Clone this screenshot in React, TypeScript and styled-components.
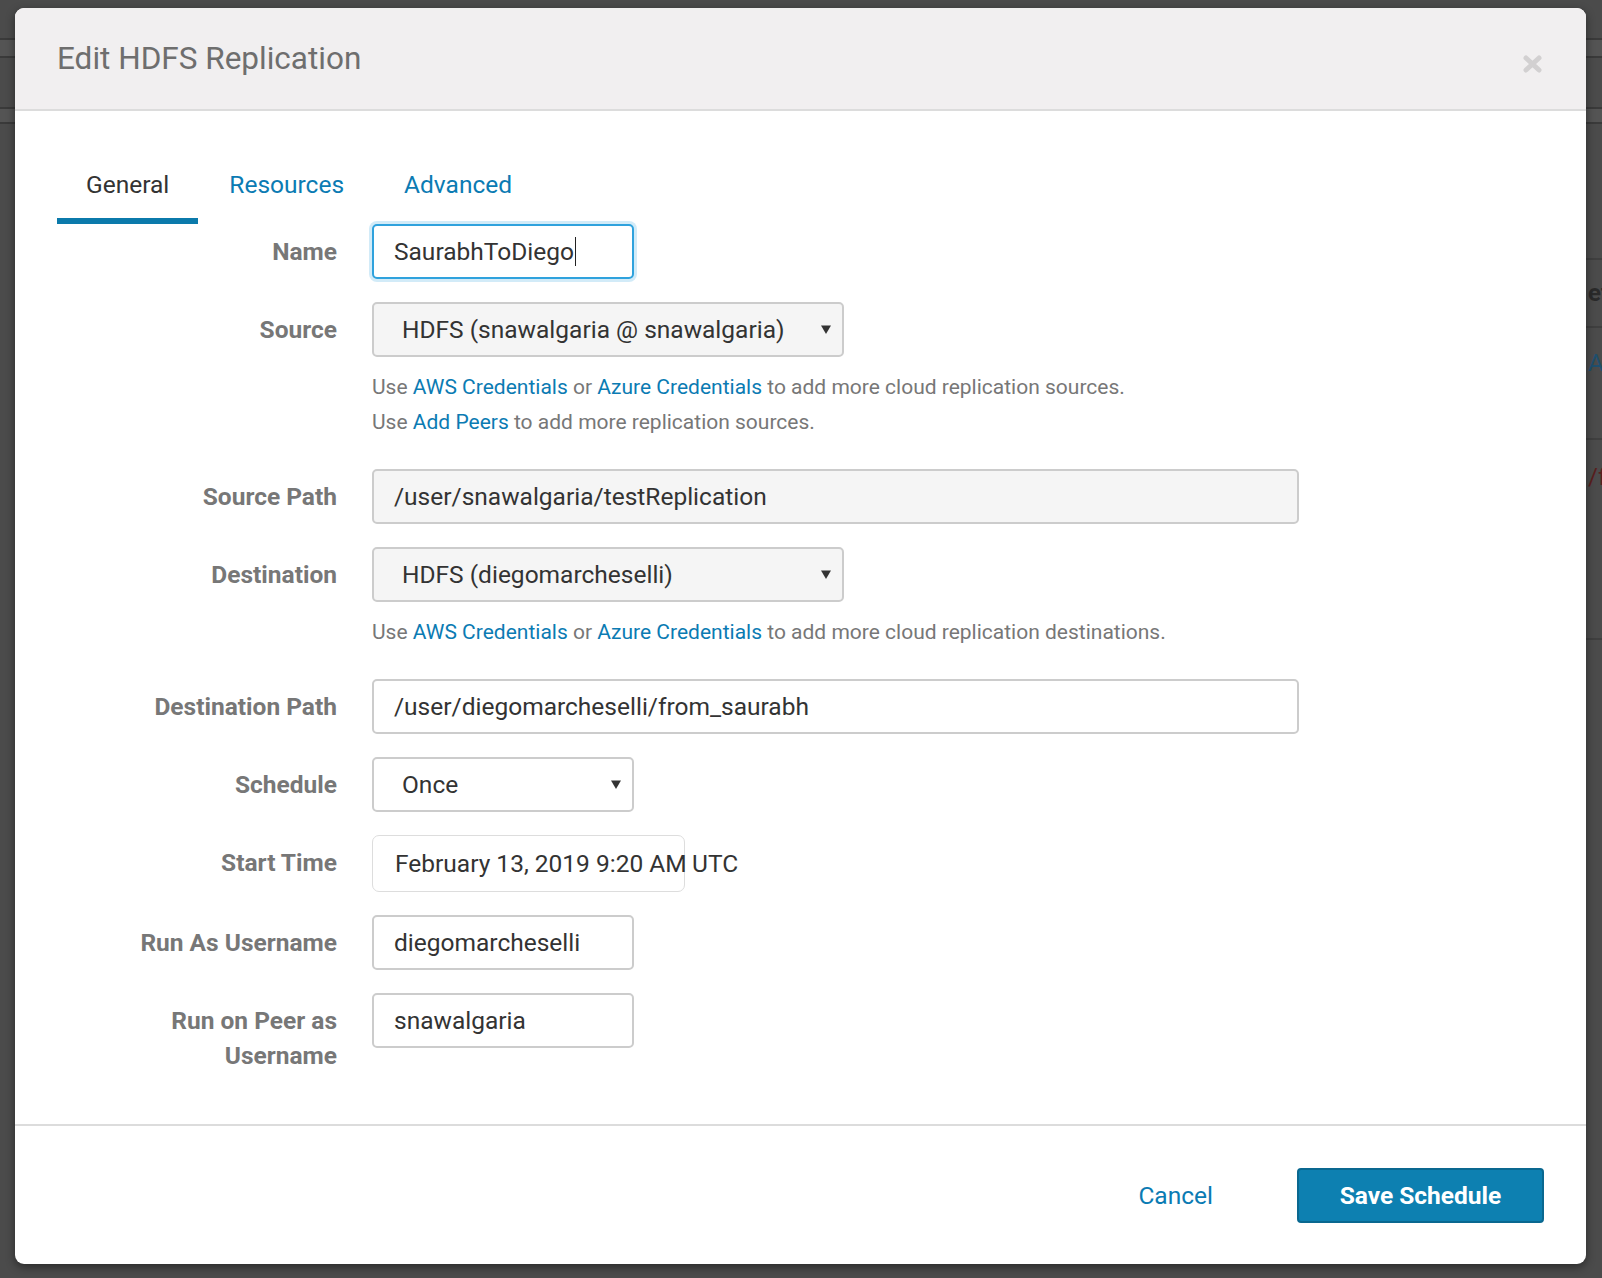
import styled, { createGlobalStyle } from "styled-components";

const GlobalStyle = createGlobalStyle`
  html, body {
    margin: 0;
    padding: 0;
  }
  body {
    background: #4b4b4b;
    font-family: Roboto, "Liberation Sans", Arial, sans-serif;
  }
  * {
    box-sizing: border-box;
  }
`;

const LINK = "#0b7bb3";

const Screen = styled.div`
  position: relative;
  width: 1602px;
  height: 1278px;
  overflow: hidden;
  padding: 8px 16px 0 15px;
`;

/* the page that lies under the backdrop */
const BackPage = styled.div`
  position: absolute;
  inset: 0;
  z-index: 0;
`;

const BackBand = styled.div<{ $h: number; $bg: string }>`
  height: ${(p) => p.$h}px;
  background: ${(p) => p.$bg};
  border-bottom: 2px solid #3a3a3a;
`;

const RightStrip = styled.div`
  position: absolute;
  top: 132px;
  right: 0;
  width: 16px;
  overflow: hidden;
`;

const StripCell = styled.div<{ $h: number; $pad: number; $color: string; $bold?: boolean }>`
  height: ${(p) => p.$h}px;
  padding: ${(p) => p.$pad}px 0 0 2px;
  border-bottom: 2px solid #3f3f3f;
  color: ${(p) => p.$color};
  font-size: 24px;
  line-height: 30px;
  font-weight: ${(p) => (p.$bold ? 700 : 400)};
  white-space: nowrap;
`;

const Modal = styled.div`
  position: relative;
  z-index: 1;
  width: 1571px;
  background: #ffffff;
  border-radius: 9px;
  overflow: hidden;
  box-shadow: 0 3px 10px rgba(0, 0, 0, 0.45);
`;

const Header = styled.div`
  height: 103px;
  background: #f1eff0;
  border-bottom: 2px solid #dcdcdc;
  padding: 0 44px 0 42px;
  display: flex;
  align-items: center;
  justify-content: space-between;
`;

const Title = styled.h3`
  margin: 0;
  font-size: 31.5px;
  font-weight: 400;
  line-height: 35px;
  color: #6e6e6e;
`;

const CloseIcon = styled.svg`
  margin-top: 11px;
  display: block;
`;

const Body = styled.div`
  padding: 42px 42px 51px 42px;
`;

const Tabs = styled.div`
  display: flex;
  gap: 2px;
`;

const Tab = styled.div<{ $active?: boolean }>`
  padding: 14px 29px 16px;
  font-size: 24.5px;
  line-height: 35px;
  color: ${(p) => (p.$active ? "#333333" : LINK)};
  border-bottom: 6px solid ${(p) => (p.$active ? "#0b7aab" : "transparent")};
`;

const FormRow = styled.div`
  display: flex;
  margin-bottom: 23px;
  &:last-child {
    margin-bottom: 0;
  }
`;

const Label = styled.div`
  width: 280px;
  flex-shrink: 0;
  padding-top: 10px;
  text-align: right;
  font-size: 24.5px;
  line-height: 35px;
  font-weight: 700;
  color: #777777;
`;

const Controls = styled.div`
  margin-left: 35px;
`;

const Field = styled.div<{ $w: number; $bg?: string }>`
  width: ${(p) => p.$w}px;
  height: 55px;
  padding: 0 20px;
  display: flex;
  align-items: center;
  border: 2px solid #cccccc;
  border-radius: 5px;
  background: ${(p) => p.$bg ?? "#ffffff"};
  font-size: 24.5px;
  color: #333333;
  white-space: nowrap;
`;

const FocusField = styled(Field)`
  border-color: #2fa2dd;
  box-shadow: 0 0 0 3px #d2ebf8;
`;

const Caret = styled.span`
  display: inline-block;
  width: 1.5px;
  height: 29px;
  margin-left: 1px;
  background: #222222;
`;

const SelectBox = styled(Field)`
  padding: 0 11px 0 28px;
  justify-content: space-between;
`;

const DateRow = styled.div`
  display: flex;
  align-items: center;
  font-size: 24.5px;
  color: #333333;
`;

const DateBox = styled.div`
  width: 313px;
  height: 57px;
  padding: 0 22px;
  display: flex;
  align-items: center;
  border: 1.5px solid #dddddd;
  border-radius: 7px;
  white-space: nowrap;
  overflow: visible;
`;

const Zone = styled.span`
  margin-left: 7px;
`;

const Help = styled.div`
  margin: 13px 0 6px;
  font-size: 21px;
  line-height: 35px;
  color: #777777;
`;

const Link = styled.a`
  color: ${LINK};
  text-decoration: none;
`;

const Footer = styled.div`
  border-top: 2px solid #dcdcdc;
  padding: 42px 42px 41px;
  display: flex;
  justify-content: flex-end;
  align-items: center;
`;

const CancelLink = styled.a`
  margin-right: 84px;
  font-size: 24.5px;
  line-height: 35px;
  color: ${LINK};
  text-decoration: none;
`;

const SaveButton = styled.button`
  width: 247px;
  height: 55px;
  border: 2px solid #0a6890;
  border-radius: 4px;
  background: #0d80b1;
  color: #ffffff;
  font-family: inherit;
  font-size: 24.5px;
  font-weight: 700;
`;

const Arrow = () => (
  <svg width="10" height="9" viewBox="0 0 10 9">
    <path d="M0 0.5 H10 L5 9 Z" fill="#333333" />
  </svg>
);

export default function App() {
  return (
    <>
      <GlobalStyle />
      <Screen>
        <BackPage>
          <BackBand $h={40} $bg="#4b4b4b" />
          <BackBand $h={18} $bg="#545454" />
          <BackBand $h={51} $bg="#4b4b4b" />
          <BackBand $h={15} $bg="#545454" />
          <RightStrip>
            <StripCell $h={128} $pad={0} $color="#2a2a2a" />
            <StripCell $h={68} $pad={18} $color="#2a2a2a" $bold>
              et
            </StripCell>
            <StripCell $h={112} $pad={20} $color="#1f4f6e">
              A
            </StripCell>
            <StripCell $h={200} $pad={22} $color="#5a1e1e">
              /f
            </StripCell>
          </RightStrip>
        </BackPage>

        <Modal>
          <Header>
            <Title>Edit HDFS Replication</Title>
            <CloseIcon width="19" height="18" viewBox="0 0 19 18">
              <path
                d="M3 3 L16 15 M16 3 L3 15"
                stroke="#d2d0d1"
                strokeWidth="5"
                strokeLinecap="round"
              />
            </CloseIcon>
          </Header>

          <Body>
            <Tabs>
              <Tab $active>General</Tab>
              <Tab>Resources</Tab>
              <Tab>Advanced</Tab>
            </Tabs>

            <FormRow>
              <Label>Name</Label>
              <Controls>
                <FocusField $w={262}>
                  SaurabhToDiego
                  <Caret />
                </FocusField>
              </Controls>
            </FormRow>

            <FormRow>
              <Label>Source</Label>
              <Controls>
                <SelectBox $w={472} $bg="#f5f5f5">
                  <span>HDFS (snawalgaria @ snawalgaria)</span>
                  <Arrow />
                </SelectBox>
                <Help>
                  Use <Link>AWS Credentials</Link> or <Link>Azure Credentials</Link> to add
                  more cloud replication sources.
                  <br />
                  Use <Link>Add Peers</Link> to add more replication sources.
                </Help>
              </Controls>
            </FormRow>

            <FormRow>
              <Label>Source Path</Label>
              <Controls>
                <Field $w={927} $bg="#f5f5f5">
                  /user/snawalgaria/testReplication
                </Field>
              </Controls>
            </FormRow>

            <FormRow>
              <Label>Destination</Label>
              <Controls>
                <SelectBox $w={472} $bg="#f5f5f5">
                  <span>HDFS (diegomarcheselli)</span>
                  <Arrow />
                </SelectBox>
                <Help>
                  Use <Link>AWS Credentials</Link> or <Link>Azure Credentials</Link> to add
                  more cloud replication destinations.
                </Help>
              </Controls>
            </FormRow>

            <FormRow>
              <Label>Destination Path</Label>
              <Controls>
                <Field $w={927}>/user/diegomarcheselli/from_saurabh</Field>
              </Controls>
            </FormRow>

            <FormRow>
              <Label>Schedule</Label>
              <Controls>
                <SelectBox $w={262}>
                  <span>Once</span>
                  <Arrow />
                </SelectBox>
              </Controls>
            </FormRow>

            <FormRow>
              <Label>Start Time</Label>
              <Controls>
                <DateRow>
                  <DateBox>February 13, 2019 9:20 AM</DateBox>
                  <Zone>UTC</Zone>
                </DateRow>
              </Controls>
            </FormRow>

            <FormRow>
              <Label>Run As Username</Label>
              <Controls>
                <Field $w={262}>diegomarcheselli</Field>
              </Controls>
            </FormRow>

            <FormRow>
              <Label>
                Run on Peer as
                <br />
                Username
              </Label>
              <Controls>
                <Field $w={262}>snawalgaria</Field>
              </Controls>
            </FormRow>
          </Body>

          <Footer>
            <CancelLink>Cancel</CancelLink>
            <SaveButton>Save Schedule</SaveButton>
          </Footer>
        </Modal>
      </Screen>
    </>
  );
}
